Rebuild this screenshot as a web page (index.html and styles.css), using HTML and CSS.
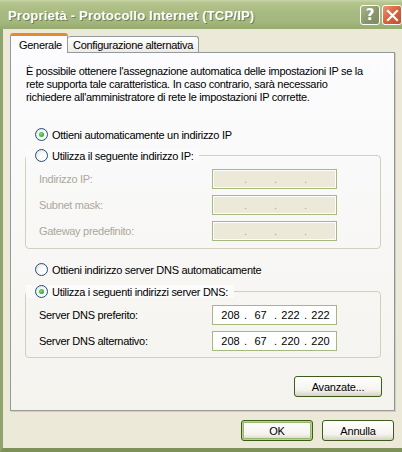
FILE: index.html
```html
<!DOCTYPE html>
<html>
<head>
<meta charset="utf-8">
<link rel="stylesheet" href="styles.css">
</head>
<body>
<div class="window">
  <div class="titlebar">
    <span class="title">Proprietà - Protocollo Internet (TCP/IP)</span>
    <div class="tb-buttons">
      <span class="tb-btn help">?</span>
      <span class="tb-btn close"><svg width="13" height="13" viewBox="0 0 13 13"><path d="M2 2 L11 11 M11 2 L2 11" stroke="#fff" stroke-width="2.2" stroke-linecap="square"/></svg></span>
    </div>
  </div>
  <div class="body">
    <div class="tabs">
      <div class="tab active">Generale</div>
      <div class="tab">Configurazione alternativa</div>
    </div>
    <div class="panel">
      <p class="desc">È possibile ottenere l'assegnazione automatica delle impostazioni IP se la rete supporta tale caratteristica. In caso contrario, sarà necessario richiedere all'amministratore di rete le impostazioni IP corrette.</p>
      <div class="radio r-first"><span class="dot checked"></span><span>Ottieni automaticamente un indirizzo IP</span></div>
      <div class="group g-ip">
        <div class="radio legend"><span class="dot"></span><span>Utilizza il seguente indirizzo IP:</span></div>
        <div class="row disabled"><span class="lbl">Indirizzo IP:</span><span class="ipbox off"><span class="f"></span><span class="d">.</span><span class="f"></span><span class="d">.</span><span class="f"></span><span class="d">.</span><span class="f"></span></span></div>
        <div class="row disabled"><span class="lbl">Subnet mask:</span><span class="ipbox off"><span class="f"></span><span class="d">.</span><span class="f"></span><span class="d">.</span><span class="f"></span><span class="d">.</span><span class="f"></span></span></div>
        <div class="row disabled"><span class="lbl">Gateway predefinito:</span><span class="ipbox off"><span class="f"></span><span class="d">.</span><span class="f"></span><span class="d">.</span><span class="f"></span><span class="d">.</span><span class="f"></span></span></div>
      </div>
      <div class="radio r-dns"><span class="dot"></span><span>Ottieni indirizzo server DNS automaticamente</span></div>
      <div class="group g-dns">
        <div class="radio legend"><span class="dot checked"></span><span>Utilizza i seguenti indirizzi server DNS:</span></div>
        <div class="row"><span class="lbl">Server DNS preferito:</span><span class="ipbox"><span class="f">208</span><span class="d">.</span><span class="f">67</span><span class="d">.</span><span class="f">222</span><span class="d">.</span><span class="f">222</span></span></div>
        <div class="row"><span class="lbl">Server DNS alternativo:</span><span class="ipbox"><span class="f">208</span><span class="d">.</span><span class="f">67</span><span class="d">.</span><span class="f">220</span><span class="d">.</span><span class="f">220</span></span></div>
      </div>
      <div class="adv-row"><button class="btn adv">Avanzate...</button></div>
    </div>
    <div class="footer">
      <button class="btn ok">OK</button>
      <button class="btn">Annulla</button>
    </div>
  </div>
</div>
</body>
</html>
```
FILE: styles.css
```css
* { box-sizing: border-box; }
html, body { margin: 0; padding: 0; background: #ECE9D8; }
body { width: 402px; height: 452px; overflow: hidden; font-family: "Liberation Sans", Arial, sans-serif; font-size: 11px; letter-spacing: -0.3px; color: #000; }
.window { width: 402px; height: 452px; display: flex; flex-direction: column; border-left: 3px solid #8FA46C; border-bottom: 4px solid #7D9159; }
.titlebar { height: 29px; margin-left: -3px; display: flex; align-items: center; justify-content: space-between; padding: 0 0 0 8px;
  background: linear-gradient(#C8D5A9 0px, #B3C48D 3px, #A8BB82 12px, #A3B67C 22px, #98AC70 29px); }
.title { font-family: "Liberation Sans", Arial, sans-serif; font-weight: bold; font-size: 13px; color: #fff; letter-spacing: 0.2px; text-shadow: 1px 1px 0 #6E7E4E; padding-top: 1px; }
.tb-buttons { display: flex; gap: 2px; padding-top: 1px; }
.tb-btn { width: 20px; height: 20px; border: 1px solid #fff; border-radius: 3px; display: flex; align-items: center; justify-content: center; }
.help { background: linear-gradient(135deg, #A9B588, #87966A 60%, #7E8D61); color: #fff; font-family: "DejaVu Sans", sans-serif; font-weight: bold; font-size: 15px; letter-spacing: 0; }
.close { background: linear-gradient(135deg, #E9957A, #D8603A 50%, #C84E2A); }
.body { flex: 1; display: flex; flex-direction: column; padding: 4px 0 0 7px; }
.tabs { display: flex; align-items: flex-end; height: 19px; position: relative; z-index: 1; }
.tab { height: 16px; padding: 2px 4px 0 5px; border: 1px solid #919B9C; border-bottom: none; border-radius: 3px 3px 0 0; background: linear-gradient(#FFFFFF, #ECEBE6); white-space: nowrap; }
.tab.active { height: 20px; width: 58px; padding: 3px 0 0 8px; background: #FCFCFE; border-top: 3px solid #E68B2C; margin-bottom: -1px; }
.tab + .tab { border-left: none; width: 131px; }
.panel { width: 385px; height: 359px; border: 1px solid #919B9C; border-right-color: #8D9697; border-bottom: 1px solid #9A9C9A; box-shadow: 1px 1px 0 #D0CEBF; background: linear-gradient(#FCFCFE, #F4F3EE); padding: 12px 0 0 15px; display: flex; flex-direction: column; }
.desc { margin: 0; line-height: 13px; width: 345px; }
.radio { display: flex; align-items: center; height: 13px; gap: 4px; padding-left: 9px; }
.r-first { margin-top: 24px; }
.dot { width: 13px; height: 13px; border-radius: 50%; border: 1px solid #1C5180; background: radial-gradient(circle at 65% 65%, #FFFFFF 30%, #DCDBD2 100%); position: relative; flex: none; }
.dot.checked::after { content: ""; position: absolute; left: 3px; top: 3px; width: 5px; height: 5px; border-radius: 50%; background: radial-gradient(circle at 40% 40%, #7BE07B, #21A121 80%); }
.group { width: 356px; border: 1px solid #D0D0BF; border-radius: 4px; margin-left: -1px; display: flex; flex-direction: column; }
.legend { margin-top: -7px; padding-left: 9px; width: max-content; background: linear-gradient(#FCFCFE, #FAFAF8); padding-right: 6px; }
.g-ip { margin-top: 14px; height: 94px; }
.row { display: flex; align-items: center; justify-content: space-between; height: 20px; margin-top: 6px; padding: 0 43px 0 13px; }
.g-ip .legend + .row { margin-top: 7px; }
.g-dns .legend + .row { margin-top: 7px; }
.row.disabled { color: #ACA899; }
.ipbox { width: 125px; height: 20px; border: 1px solid #A5B97F; display: flex; align-items: center; padding: 0 0 0 4px; letter-spacing: 0; }
.ipbox .f { width: 27px; text-align: center; }
.ipbox .d { width: 3px; text-align: center; }
.ipbox.off { background: #ECE9D8; box-shadow: inset 0 0 0 1px #fff; color: #ACA899; }
.ipbox:not(.off) { background: #fff; }
.r-dns { margin-top: 14px; }
.g-dns { margin-top: 15px; height: 67px; }
.adv-row { display: flex; justify-content: flex-end; margin-top: 18px; padding-right: 12px; }
.btn { font-family: "Liberation Sans", Arial, sans-serif; font-size: 11px; letter-spacing: -0.2px; color: #000; height: 21px; border: 1px solid #3D5B1A; border-radius: 3px; background: linear-gradient(#FFFFFF, #F4F3EE 70%, #D6D0C5); padding: 0; }
.adv { width: 88px; }
.footer { display: flex; justify-content: flex-end; gap: 9px; margin-top: 9px; padding-right: 8px; }
.footer .btn { width: 72px; }
.btn.ok { box-shadow: inset 0 0 0 1px #B7D292, inset 0 0 0 2px #98B86A; }
```
